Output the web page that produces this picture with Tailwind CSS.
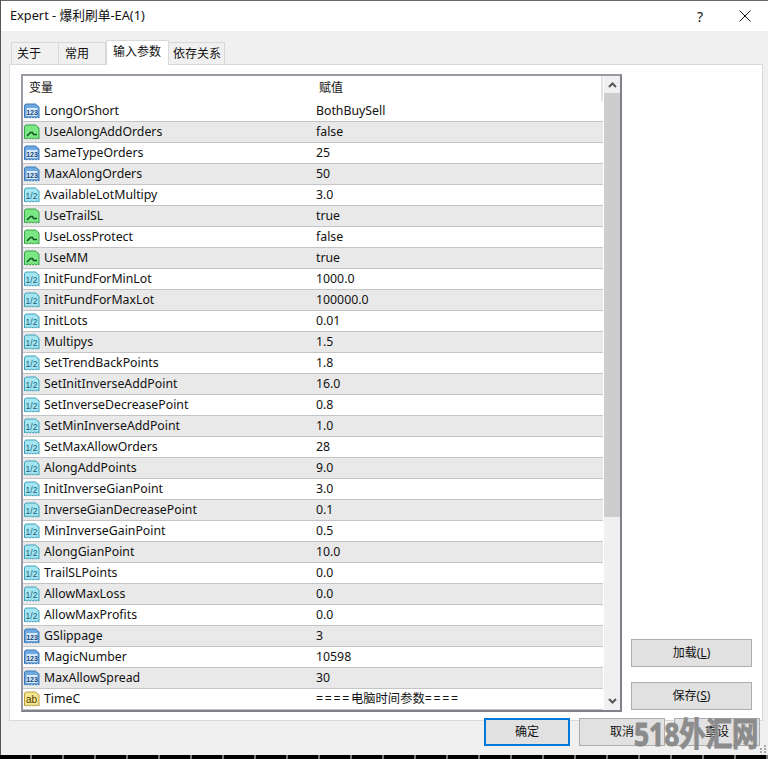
<!DOCTYPE html>
<html lang="en">
<head>
    <meta charset="UTF-8">
    <title>Expert</title>
    <script src="https://cdn.jsdelivr.net/npm/@tailwindcss/browser@4"></script>
</head>
<body class="bg-black">
    <!-- Icon shapes used by the rows -->
    <svg class="hidden">
        <symbol id="ic-int" viewBox="0 0 16 16">
            <path d="M.5 15V3a2 2 0 0 1 2-2h9l3.500 3v11l-1.500-1-1.500 1-1.500-1-1.500 1-1.500-1-1.500 1-1.500-1-1.500 1-1.500-1z" fill="#6ea8e0" stroke="#3f78b5"/>
            <rect x="2.500" y="5" width="11" height="8" fill="#d8e9fa"/>
            <text x="8" y="11.500" text-anchor="middle" font-size="7" font-weight="700" fill="#17457a" font-family="Liberation Sans">123</text>
        </symbol>
        <symbol id="ic-bool" viewBox="0 0 16 16">
            <path d="M.5 15V3a2 2 0 0 1 2-2h9l3.500 3v11l-1.500-1-1.500 1-1.500-1-1.500 1-1.500-1-1.500 1-1.500-1-1.500 1-1.500-1z" fill="#7be884" stroke="#3a9f4c"/>
            <path d="M3 12l3.500-3.500h2l1 2h3.500" fill="none" stroke="#0f5525" stroke-width="1.500"/>
        </symbol>
        <symbol id="ic-dbl" viewBox="0 0 16 16">
            <path d="M.5 15V3a2 2 0 0 1 2-2h9l3.500 3v11l-1.500-1-1.500 1-1.500-1-1.500 1-1.500-1-1.500 1-1.500-1-1.500 1-1.500-1z" fill="#a5e6f2" stroke="#3fa0b8"/>
            <text x="7.500" y="11.500" text-anchor="middle" font-size="8.500" fill="#17607a" font-family="Liberation Sans">1/2</text>
        </symbol>
        <symbol id="ic-str" viewBox="0 0 16 16">
            <path d="M.5 15V3a2 2 0 0 1 2-2h9l3.500 3v11l-1.500-1-1.500 1-1.500-1-1.500 1-1.500-1-1.500 1-1.500-1-1.500 1-1.500-1z" fill="#f7e58f" stroke="#b89c3f"/>
            <text x="7.500" y="11.500" text-anchor="middle" font-size="10" fill="#4a3c08" font-family="Liberation Sans">ab</text>
        </symbol>
    </svg>

    <div class="w-[768px] h-[755px] bg-[#f0f0f0] border-l border-l-[#555] flex flex-col text-[12px] text-[#111] font-['Noto_Sans','Noto_Sans_CJK_SC',sans-serif] overflow-hidden relative">
        <!-- Title bar -->
        <div class="h-[31px] bg-white border-t border-t-[#666] flex items-center pl-[9px] shrink-0">
            <span class="flex-1 text-[12.750px]">Expert - 爆利刷单-EA(1)</span>
            <span class="w-[46px] text-center text-[14px] mr-[5px]">?</span>
            <svg class="w-[12px] h-[12px] mr-[17px] ml-[11px]" viewBox="0 0 12 12"><path d="M.5.5l11 11M11.500.5l-11 11" stroke="#111" fill="none"/></svg>
        </div>

        <!-- Tabs -->
        <div class="flex items-end h-[33px] pl-[10px] shrink-0 relative z-10 whitespace-nowrap">
            <div class="w-[48px] h-[22px] bg-[#f0f0f0] border border-[#d9d9d9] border-b-0 pl-[5px] leading-[21px]">关于</div>
            <div class="w-[47px] h-[22px] bg-[#f0f0f0] border border-l-0 border-[#d9d9d9] border-b-0 pl-[6px] leading-[21px]">常用</div>
            <div class="w-[63px] h-[25px] bg-white border border-[#d9d9d9] border-b-0 pl-[6px] leading-[21px] -mb-px">输入参数</div>
            <div class="w-[56px] h-[22px] bg-[#f0f0f0] border border-l-0 border-[#d9d9d9] border-b-0 pl-[4px] leading-[21px]">依存关系</div>
        </div>

        <!-- Tab page -->
        <div class="ml-[8px] w-[754px] h-[657px] bg-white border border-[#d9d9d9] shrink-0 flex pt-[9px] pl-[11px]">
            <!-- List -->
            <div class="w-[601px] h-[638px] border-2 border-[#9a9aa2] border-r-[#80808a] border-b-[#80808a] bg-white flex overflow-hidden shrink-0">
                <div class="w-[580px] shrink-0">
                    <div class="h-[25px] flex items-center pb-[2px] border-r-2 border-r-[#e4e4e4]">
                        <span class="w-[290px] pl-[6px]">变量</span>
                        <span class="pl-[6px]">赋值</span>
                    </div>
                    <div id="rows"></div>
                </div>
                <!-- Scrollbar -->
                <div class="w-[16px] ml-px bg-[#f0f0f0] flex flex-col items-center shrink-0">
                    <div class="h-[17px] flex items-center"><svg class="w-[9px] h-[6px]" viewBox="0 0 9 6"><path d="M1 5l3.500-3.500L8 5" fill="none" stroke="#555" stroke-width="2"/></svg></div>
                    <div class="w-full h-[424px] bg-[#cdcdcd]"></div>
                    <div class="flex-1"></div>
                    <div class="h-[17px] flex items-center mb-[1px]"><svg class="w-[9px] h-[6px]" viewBox="0 0 9 6"><path d="M1 1l3.500 3.500L8 1" fill="none" stroke="#555" stroke-width="2"/></svg></div>
                </div>
            </div>
            <!-- Load / save -->
            <div class="flex flex-col gap-[15px] ml-[9px] mt-[565px]">
                <button class="w-[121px] h-[28px] bg-[#e1e1e1] border border-[#adadad]">加载(<u>L</u>)</button>
                <button class="w-[121px] h-[28px] bg-[#e1e1e1] border border-[#adadad]">保存(<u>S</u>)</button>
            </div>
        </div>

        <!-- Dialog buttons, they sit over the page's bottom edge -->
        <div class="flex gap-[9px] justify-end pr-[8px] -mt-[3px] relative z-10">
            <button class="w-[86px] h-[28px] bg-[#e1e1e1] border-2 border-[#0078d7]">确定</button>
            <button class="w-[86px] h-[28px] bg-[#e1e1e1] border border-[#adadad]">取消</button>
            <button class="w-[86px] h-[28px] bg-[#e1e1e1] border border-[#adadad]">重设</button>
        </div>

        <!-- Watermark -->
        <div class="absolute z-20 left-[633px] top-[714px] text-[33px] leading-[40px] font-bold text-[#8c8c8c] [-webkit-text-stroke:1px_#8c8c8c] whitespace-nowrap origin-left scale-x-[0.8]">518外汇网</div>
        <svg class="absolute z-20 left-[759px] top-[745px] w-[6px] h-[8px]" viewBox="0 0 6 8"><path d="M4 0h2v2H4zM0 3h2v2H0zM4 3h2v2H4zM0 6h2v2H0zM4 6h2v2H4z" fill="#a8a8a8"/></svg>
    </div>
    <div class="h-[4px] w-[768px] bg-[repeating-linear-gradient(90deg,#000_0,#000_30px,#777_30px,#777_32px)]"></div>

    <script>
        const eq = '<span class="tracking-[1.700px]">====</span>';
        const params = [
            ["int", "LongOrShort", "BothBuySell"],
            ["bool", "UseAlongAddOrders", "false"],
            ["int", "SameTypeOrders", "25"],
            ["int", "MaxAlongOrders", "50"],
            ["dbl", "AvailableLotMultipy", "3.0"],
            ["bool", "UseTrailSL", "true"],
            ["bool", "UseLossProtect", "false"],
            ["bool", "UseMM", "true"],
            ["dbl", "InitFundForMinLot", "1000.0"],
            ["dbl", "InitFundForMaxLot", "100000.0"],
            ["dbl", "InitLots", "0.01"],
            ["dbl", "Multipys", "1.5"],
            ["dbl", "SetTrendBackPoints", "1.8"],
            ["dbl", "SetInitInverseAddPoint", "16.0"],
            ["dbl", "SetInverseDecreasePoint", "0.8"],
            ["dbl", "SetMinInverseAddPoint", "1.0"],
            ["dbl", "SetMaxAllowOrders", "28"],
            ["dbl", "AlongAddPoints", "9.0"],
            ["dbl", "InitInverseGianPoint", "3.0"],
            ["dbl", "InverseGianDecreasePoint", "0.1"],
            ["dbl", "MinInverseGainPoint", "0.5"],
            ["dbl", "AlongGianPoint", "10.0"],
            ["dbl", "TrailSLPoints", "0.0"],
            ["dbl", "AllowMaxLoss", "0.0"],
            ["dbl", "AllowMaxProfits", "0.0"],
            ["int", "GSlippage", "3"],
            ["int", "MagicNumber", "10598"],
            ["int", "MaxAllowSpread", "30"],
            ["str", "TimeC", eq + "电脑时间参数" + eq],
        ];
        let html = "";
        params.forEach((p, i) => {
            let bg = i % 2 ? "bg-[#e9e9e9]" : "bg-white";
            html += `<div class="h-[21px] flex items-center border-b border-b-[#c4c4c4] text-[12.300px] ${bg}">
                <svg class="w-[16px] h-[16px] ml-[1px] mr-[4px] shrink-0"><use href="#ic-${p[0]}"></use></svg>
                <span class="w-[272px] shrink-0 whitespace-nowrap">${p[1]}</span>
                <span class="whitespace-nowrap">${p[2]}</span>
            </div>`;
        });
        document.getElementById("rows").innerHTML = html;
    </script>
</body>
</html>
